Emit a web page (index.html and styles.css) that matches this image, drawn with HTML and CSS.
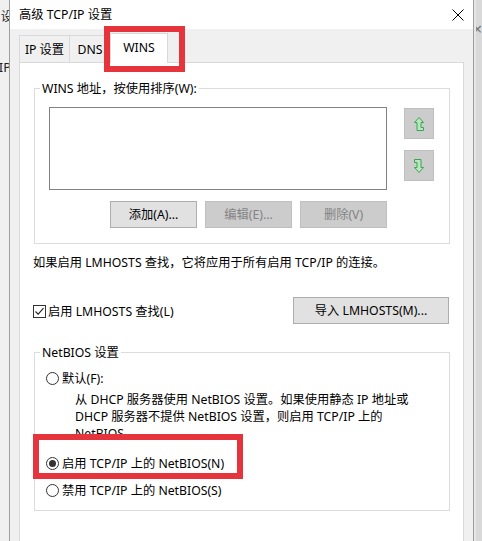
FILE: index.html
```html
<!DOCTYPE html>
<html lang="zh-CN">
<head>
<meta charset="utf-8">
<title>高级 TCP/IP 设置</title>
<link rel="stylesheet" href="styles.css">
</head>
<body>
<div class="screen">
  <div class="bg-left">
    <span class="frag frag-1">设</span>
    <span class="frag frag-2">IP</span>
  </div>
  <div class="dialog">
    <div class="titlebar">
      <span class="title">高级 TCP/IP 设置</span>
      <svg class="close" width="12" height="12" viewBox="0 0 12 12"><path d="M0.5 0.5 L11.5 11.5 M11.5 0.5 L0.5 11.5" stroke="#000" stroke-width="1" fill="none"/></svg>
    </div>
    <div class="dlg-body">
      <div class="tabs">
        <div class="tab tab-ip">IP 设置</div>
        <div class="tab tab-dns">DNS</div>
        <div class="tab tab-active">WINS</div>
      </div>
      <div class="panel">
        <div class="group group-wins">
          <div class="legend">WINS 地址，按使用排序(W):</div>
          <div class="wins-grid">
            <div class="listbox"></div>
            <div class="arrows">
              <div class="btn btn-disabled btn-arrow">
                <svg width="12" height="16" viewBox="0 0 12 16"><path d="M6 1.5 L10.5 6.5 H8 V11.5 H10.5 V14.5 H4 V6.5 H1.5 Z" fill="#b9e6bf" stroke="#3aa655" stroke-width="1" stroke-linejoin="round"/></svg>
              </div>
              <div class="btn btn-disabled btn-arrow">
                <svg width="12" height="16" viewBox="0 0 12 16"><path d="M6 14.5 L1.5 9.5 H4 V4.5 H1.5 V1.5 H8 V9.5 H10.5 Z" fill="#b9e6bf" stroke="#3aa655" stroke-width="1" stroke-linejoin="round"/></svg>
              </div>
            </div>
            <div class="btn-row">
              <div class="btn">添加(A)...</div>
              <div class="btn btn-disabled">编辑(E)...</div>
              <div class="btn btn-disabled">删除(V)</div>
            </div>
          </div>
        </div>
        <p class="info">如果启用 LMHOSTS 查找，它将应用于所有启用 TCP/IP 的连接。</p>
        <div class="lm-row">
          <div class="check">
            <span class="checkbox"><svg width="11" height="11" viewBox="0 0 11 11"><path d="M1.5 5.5 L4.2 8.2 L9.5 2.2" stroke="#222" stroke-width="1.1" fill="none"/></svg></span>
            <span>启用 LMHOSTS 查找(L)</span>
          </div>
          <div class="btn btn-import">导入 LMHOSTS(M)...</div>
        </div>
        <div class="group group-netbios">
          <div class="legend">NetBIOS 设置</div>
          <div class="radio-row r1"><span class="radio"></span><span>默认(F):</span></div>
          <div class="desc">从 DHCP 服务器使用 NetBIOS 设置。如果使用静态 IP 地址或<br>DHCP 服务器不提供 NetBIOS 设置，则启用 TCP/IP 上的<br>NetBIOS。</div>
          <div class="radio-row r2"><span class="radio checked"></span><span>启用 TCP/IP 上的 NetBIOS(N)</span></div>
          <div class="radio-row r3"><span class="radio"></span><span>禁用 TCP/IP 上的 NetBIOS(S)</span></div>
        </div>
      </div>
    </div>
  </div>
  <div class="bg-right">
    <span class="frag frag-x">×</span>
  </div>
  <div class="mark mark-tab"></div>
  <div class="mark mark-radio"></div>
</div>
</body>
</html>
```

FILE: styles.css
```css
* { box-sizing: border-box; }

html, body {
  margin: 0;
  padding: 0;
  width: 482px;
  height: 541px;
  overflow: hidden;
  background: #f0f0f0;
}

body {
  font-family: "Noto Sans", "Noto Sans CJK SC", sans-serif;
  font-size: 12.25px;
  line-height: 17px;
  color: #000;
}

.screen {
  position: relative;
  display: flex;
  width: 482px;
  height: 541px;
  overflow: hidden;
}

/* background windows */
.bg-left {
  width: 9px;
  flex: none;
  background: #f0f0f0;
  overflow: hidden;
  display: flex;
  flex-direction: column;
  align-items: flex-end;
}

.frag {
  display: block;
  white-space: nowrap;
  color: #222;
}

.frag-1 { margin-top: 8px; margin-right: -4px; }
.frag-2 { margin-top: 34px; margin-right: -2px; font-size: 13px; }

.bg-right {
  width: 8px;
  flex: none;
  background: #d9d9d9;
  border-left: 2px solid #e6e6e6;
  overflow: hidden;
}

.frag-x {
  margin-top: 21px;
  margin-left: -3px;
  font-size: 16px;
  color: #777;
}

/* dialog */
.dialog {
  width: 465px;
  flex: none;
  display: flex;
  flex-direction: column;
  border-left: 1px solid #9e9e9e;
  border-right: 1px solid #9e9e9e;
  background: #f0f0f0;
}

.titlebar {
  height: 29px;
  flex: none;
  background: #fff;
  display: flex;
  align-items: center;
  justify-content: space-between;
  padding: 0 9px 0 9px;
}

.title { white-space: nowrap; }

.close { display: block; }

.dlg-body {
  flex: 1;
  display: flex;
  flex-direction: column;
  padding: 4px 9px 0 9px;
}

.tabs {
  display: flex;
  align-items: flex-end;
  height: 29px;
}

.tab {
  height: 27px;
  border: 1px solid #d9d9d9;
  border-bottom: none;
  background: #f0f0f0;
  display: flex;
  align-items: center;
  justify-content: center;
  white-space: nowrap;
}

.tab-ip { width: 51px; }
.tab-dns { width: 41px; border-left: none; }

.tab-active {
  position: relative;
  z-index: 1;
  width: 58px;
  height: 30px;
  margin-left: -1px;
  margin-bottom: -1px;
  background: #fff;
  padding-bottom: 2px;
}

.panel {
  flex: 1;
  background: #fff;
  border: 1px solid #d9d9d9;
  border-bottom: none;
  padding: 0 13px 0 14px;
}

/* group boxes */
.group {
  border: 1px solid #dcdcdc;
}

.legend {
  width: max-content;
  background: #fff;
  padding: 0 2px;
  margin-top: -9px;
  white-space: nowrap;
}

.group-wins {
  margin-top: 25px;
  padding: 0 15px 15px 14px;
}

.group-wins .legend { margin-left: -9px; }

.wins-grid {
  margin-top: 10px;
  display: grid;
  grid-template-columns: 338px 30px;
  column-gap: 17px;
  row-gap: 11px;
}

.listbox {
  height: 83px;
  border: 1px solid #828282;
  background: #fff;
}

.arrows {
  margin-top: 1px;
  display: flex;
  flex-direction: column;
  gap: 11px;
}

.btn {
  height: 27px;
  width: 87px;
  border: 1px solid #adadad;
  background: #e1e1e1;
  display: flex;
  align-items: center;
  justify-content: center;
  white-space: nowrap;
}

.btn-disabled {
  background: #cccccc;
  border-color: #bfbfbf;
  color: #838383;
}

.btn-arrow {
  width: 30px;
  height: 31px;
}

.btn-arrow svg { display: block; }

.btn-row {
  grid-column: 1;
  display: flex;
  justify-content: flex-end;
  gap: 8px;
}

.info {
  margin: 10px 0 0 -1px;
  white-space: nowrap;
}

.lm-row {
  margin-top: 26px;
  display: flex;
  align-items: center;
  justify-content: space-between;
}

.check {
  display: flex;
  align-items: center;
  gap: 2px;
  margin-left: -1px;
  margin-top: 2px;
}

.checkbox {
  width: 13px;
  height: 13px;
  border: 1px solid #333;
  background: #fff;
  display: flex;
  align-items: center;
  justify-content: center;
}

.checkbox svg { display: block; }

.btn-import {
  width: 156px;
  margin-right: 1px;
}

.group-netbios {
  margin-top: 28px;
  padding: 0 11px 11px 11px;
}

.group-netbios .legend { margin-left: -6px; }

.radio-row {
  display: flex;
  align-items: center;
  gap: 3px;
  white-space: nowrap;
}

.r1 { margin-top: 9px; }
.r2 { margin-top: 20px; }
.r3 { margin-top: 10px; }

.radio {
  width: 13px;
  height: 13px;
  border: 1px solid #333;
  border-radius: 50%;
  background: #fff;
  display: flex;
  align-items: center;
  justify-content: center;
}

.radio.checked::after {
  content: "";
  width: 7px;
  height: 7px;
  border-radius: 50%;
  background: #333;
}

.desc {
  margin: 4px 0 0 29px;
  height: 44px;
  overflow: hidden;
  white-space: nowrap;
}

/* red annotation boxes drawn over the screenshot */
.mark {
  position: absolute;
  border: 6px solid #e5343b;
  z-index: 5;
}

.mark-tab {
  left: 104px;
  top: 26px;
  width: 81px;
  height: 46px;
}

.mark-radio {
  left: 33px;
  top: 434px;
  width: 210px;
  height: 45px;
}
```
